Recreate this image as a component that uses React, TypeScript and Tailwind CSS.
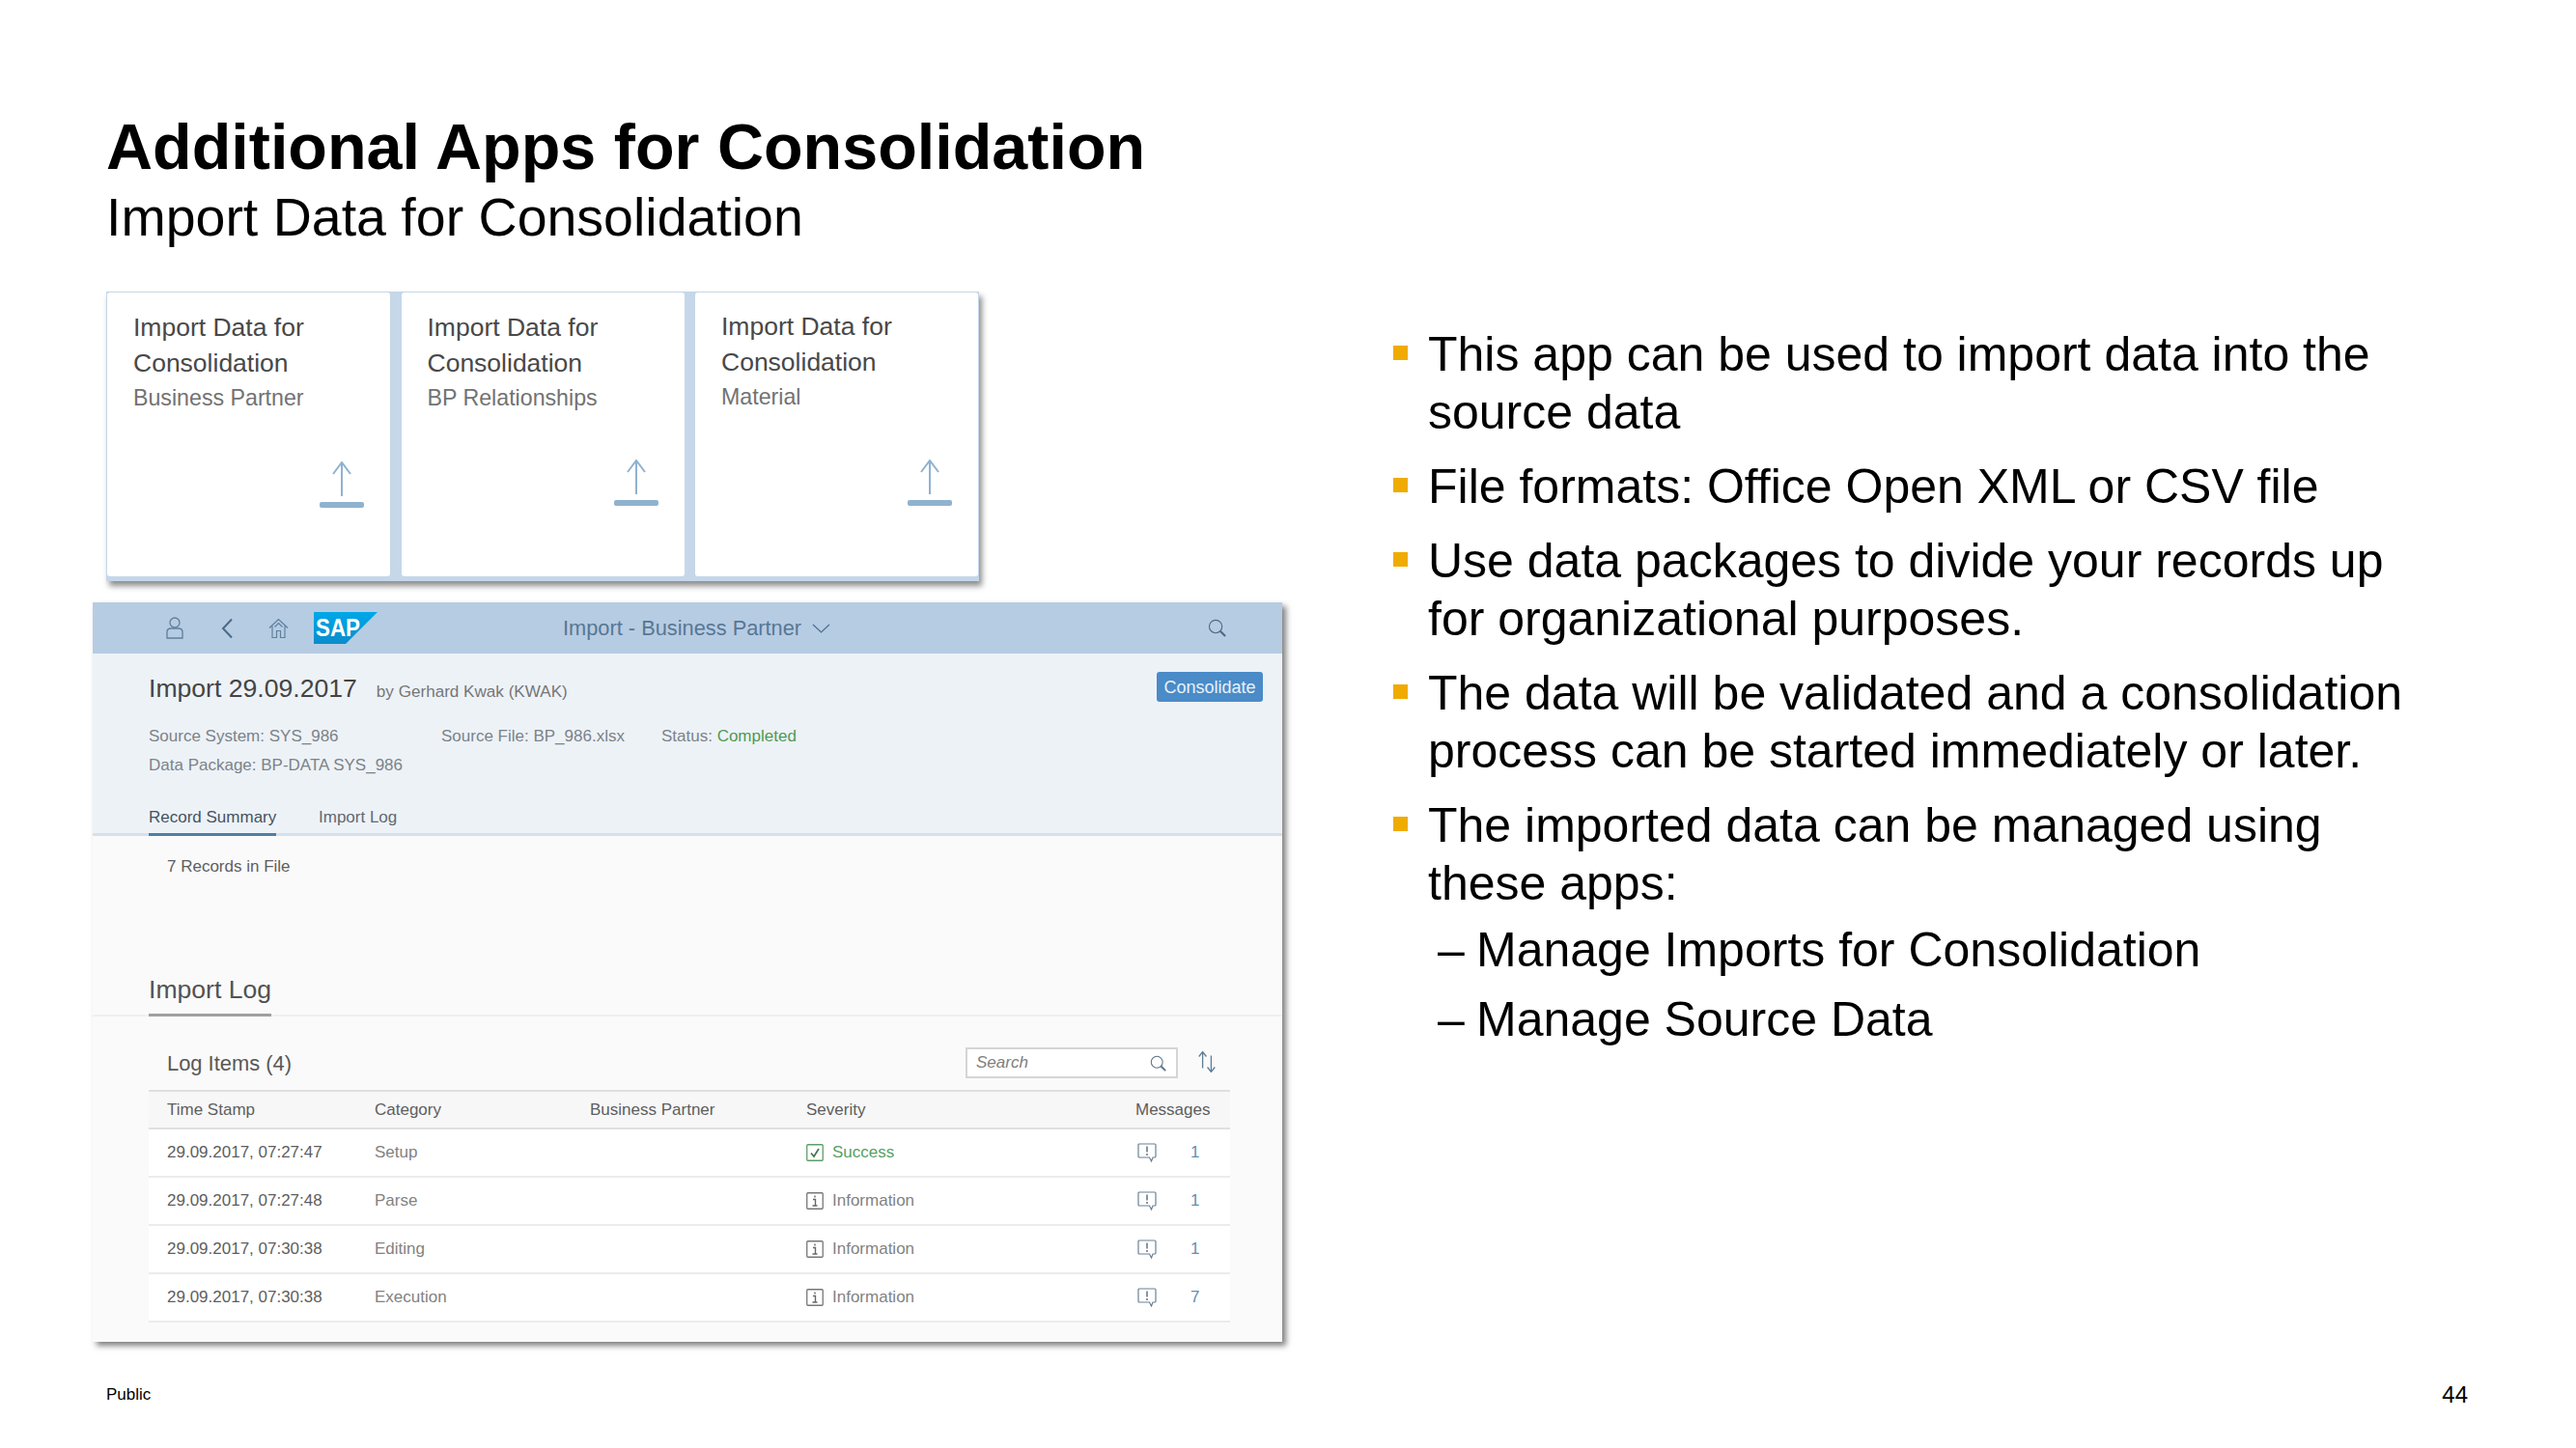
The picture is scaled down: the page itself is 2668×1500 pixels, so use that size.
import { ReactNode } from 'react';

const tiles = [
  { sub: 'Business Partner', top: 'pt-[18px]', iconTop: 'mt-[48px]' },
  { sub: 'BP Relationships', top: 'pt-[18px]', iconTop: 'mt-[46px]' },
  { sub: 'Material', top: 'pt-[17px]', iconTop: 'mt-[47px]' },
];

const logRows = [
  { time: '29.09.2017, 07:27:47', category: 'Setup', severity: 'Success', count: '1' },
  { time: '29.09.2017, 07:27:48', category: 'Parse', severity: 'Information', count: '1' },
  { time: '29.09.2017, 07:30:38', category: 'Editing', severity: 'Information', count: '1' },
  { time: '29.09.2017, 07:30:38', category: 'Execution', severity: 'Information', count: '7' },
];

const bullets = [
  { lines: ['This app can be used to import data into the', 'source data'] },
  { lines: ['File formats: Office Open XML or CSV file'] },
  { lines: ['Use data packages to divide your records up', 'for organizational purposes.'] },
  { lines: ['The data will be validated and a consolidation', 'process can be started immediately or later.'] },
  { lines: ['The imported data can be managed using', 'these apps:'] },
];

function UploadIcon() {
  return (
    <svg width="46" height="48" viewBox="0 0 46 48" fill="none" className="block">
      <path d="M23 36V1M14 13L23 1L32 13" stroke="#8fb2cf" strokeWidth="2" />
      <rect x="0" y="42" width="46" height="6" rx="2" fill="#8fb2cf" />
    </svg>
  );
}

function SearchGlyph({ size, color }: { size: number; color: string }) {
  return (
    <svg width={size} height={size} viewBox="0 0 20 20" fill="none" className="block">
      <circle cx="8.5" cy="8.5" r="7" stroke={color} strokeWidth="1.2" />
      <path d="M13.5 13.5L19 19" stroke={color} strokeWidth="2.2" />
    </svg>
  );
}

function SeverityIcon({ success }: { success: boolean }) {
  if (success) {
    return (
      <svg width="18" height="18" viewBox="0 0 18 18" fill="none" className="block">
        <rect x="0.75" y="0.75" width="16.5" height="16.5" rx="1" stroke="#5c9e68" strokeWidth="1.3" />
        <path d="M5 9.5L8 13L13 5" stroke="#47764f" strokeWidth="1.7" />
      </svg>
    );
  }
  return (
    <svg width="18" height="18" viewBox="0 0 18 18" fill="none" className="block">
      <rect x="0.75" y="0.75" width="16.5" height="16.5" rx="1" stroke="#777" strokeWidth="1.3" />
      <path d="M9 3.500V5.500M7 7.500H9.500V14M6.500 14H11.500" stroke="#666" strokeWidth="1.4" />
    </svg>
  );
}

function MessageIcon() {
  return (
    <svg width="20" height="20" viewBox="0 0 20 20" fill="none" className="block">
      <path d="M2 1H18A1 1 0 0 1 19 2V14A1 1 0 0 1 18 15H16L14.500 19L12.500 15H2A1 1 0 0 1 1 14V2A1 1 0 0 1 2 1Z" stroke="#6b8296" strokeWidth="1.2" />
      <path d="M10 3.500V9.500M10 11V13" stroke="#5d7386" strokeWidth="1.5" />
    </svg>
  );
}

function TableRow({ children, className }: { children: ReactNode; className: string }) {
  return <div className={`grid grid-cols-[19px_215px_223px_224px_341px_1fr] items-center ${className}`}>{children}</div>;
}

export default function App() {
  return (
    <div className="w-[2668px] h-[1500px] bg-white text-black flex flex-col overflow-hidden font-['Liberation_Sans',Arial,sans-serif]">
      {/* Slide title */}
      <div className="pt-[114px] pl-[110px]">
        <h1 className="h-[76px] text-[66.5px] leading-[76px] font-bold">Additional Apps for Consolidation</h1>
        <h2 className="mt-[5px] h-[60px] text-[55.5px] leading-[60px]">Import Data for Consolidation</h2>
      </div>

      <div className="flex mt-[47px] pl-[96px]">
        {/* Left: screenshots */}
        <div className="w-[1232px] shrink-0">
          <div className="ml-[14px] w-[904px] h-[300px] bg-[#c5d7e9] flex gap-[11.5px] pl-[1px] pt-[1px] shadow-[3px_5px_6px_rgba(0,0,0,0.45)]">
            {tiles.map((tile) => (
              <div key={tile.sub} className={`w-[293px] h-[294px] bg-white rounded-[3px] pl-[27px] ${tile.top}`}>
                <div className="text-[26.5px] leading-[37px] text-[#484848]">
                  Import Data for
                  <br />
                  Consolidation
                </div>
                <div className="text-[23.2px] leading-[35px] text-[#727272]">{tile.sub}</div>
                <div className={`flex justify-end pr-[27px] ${tile.iconTop}`}>
                  <UploadIcon />
                </div>
              </div>
            ))}
          </div>

          <div className="mt-[22px] h-[766px] bg-[#fafafa] flex flex-col shadow-[4px_4px_6px_rgba(0,0,0,0.5)]">
            {/* Shell bar */}
            <div className="h-[53px] bg-[#b6cce3] flex items-center shrink-0">
              <svg width="18" height="23" viewBox="0 0 18 23" fill="none" className="ml-[76px] block">
                <circle cx="9" cy="6" r="5" stroke="#5f7f9e" strokeWidth="1.3" />
                <path d="M1 22V16C1 13 3 12 5 12H13C15 12 17 13 17 16V22Z" stroke="#5f7f9e" strokeWidth="1.3" />
              </svg>
              <svg width="12" height="22" viewBox="0 0 12 22" fill="none" className="ml-[39px] block">
                <path d="M11 1.500L2 11L11 20.500" stroke="#4a6a88" strokeWidth="2" />
              </svg>
              <svg width="21" height="22" viewBox="0 0 21 22" fill="none" className="ml-[37px] block">
                <path d="M1 10.500L10.500 1.500L20 10.500M4 8.500V20.500H8.500V13.500H12.500V20.500H17V8.500M6.500 9.500L10.500 5.500L14.500 9.500" stroke="#5f7f9e" strokeWidth="1.2" />
              </svg>
              <svg width="66" height="33" viewBox="0 0 66 33" className="ml-[26px] block">
                <defs>
                  <linearGradient id="sapBlue" x1="0" y1="0" x2="0" y2="1">
                    <stop offset="0" stopColor="#00a8e8" />
                    <stop offset="1" stopColor="#0a8ccc" />
                  </linearGradient>
                </defs>
                <polygon points="0,0 66,0 33,33 0,33" fill="url(#sapBlue)" />
                <text x="2" y="25" fill="#ffffff" fontSize="25" fontWeight="700" textLength="46" lengthAdjust="spacingAndGlyphs">SAP</text>
              </svg>
              <span className="ml-[192px] text-[21.8px] text-[#587793] leading-none">Import - Business Partner</span>
              <svg width="19" height="10" viewBox="0 0 19 10" fill="none" className="ml-[11px] block">
                <path d="M1 1L9.500 9L18 1" stroke="#4f6f8d" strokeWidth="1.2" />
              </svg>
              <div className="ml-[391px]">
                <SearchGlyph size={19} color="#4f6a84" />
              </div>
            </div>

            {/* Object header */}
            <div className="h-[189px] bg-[#edf2f7] border-b-[3px] border-[#d5e1ec] pl-[58px] pr-[20px] shrink-0">
              <div className="flex items-start justify-between pt-[19px]">
                <div className="flex items-baseline h-[34px]">
                  <span className="text-[26.6px] leading-[34px] text-[#444444]">Import 29.09.2017</span>
                  <span className="ml-[20px] text-[17.1px] text-[#767676]">by Gerhard Kwak (KWAK)</span>
                </div>
                <button className="w-[110px] h-[31px] bg-[#4a8bc8] rounded-[3px] text-[18px] leading-none text-[#e8f1f9]">
                  Consolidate
                </button>
              </div>
              <div className="mt-[18px] flex text-[17px] leading-[30px] text-[#7c8388]">
                <span className="w-[303px]">Source System: SYS_986</span>
                <span className="w-[228px]">Source File: BP_986.xlsx</span>
                <span>
                  Status: <span className="text-[#4e9a57]">Completed</span>
                </span>
              </div>
              <div className="text-[17px] leading-[30px] text-[#7c8388]">Data Package: BP-DATA SYS_986</div>
              <div className="mt-[24px] flex text-[17px] leading-[30px]">
                <div className="w-[132px] h-[34px] border-b-[3px] border-[#4d7fa3] text-[#46535f] whitespace-nowrap">Record Summary</div>
                <div className="ml-[44px] text-[#5f6972]">Import Log</div>
              </div>
            </div>

            {/* Record summary */}
            <div className="h-[134px] pl-[77px] pt-[21px] text-[17px] leading-[22px] text-[#5e5e5e] shrink-0">7 Records in File</div>

            {/* Import log */}
            <div className="h-[53px] pl-[58px] border-b-2 border-[#efefef] shrink-0">
              <div className="w-[127px] h-[53px] border-b-[3px] border-[#a0a0a0] text-[26.6px] leading-[50px] text-[#525252] whitespace-nowrap">
                Import Log
              </div>
            </div>

            <div className="pl-[58px] pr-[54px]">
              <div className="h-[76px] flex items-start">
                <span className="pl-[19px] pt-[35px] text-[21.9px] leading-[28px] text-[#585858]">Log Items (4)</span>
                <div className="ml-auto mt-[32px] w-[220px] h-[32px] bg-white border-2 border-[#d5d5d5] flex items-center justify-between pl-[9px] pr-[10px]">
                  <span className="text-[17px] italic text-[#808080]">Search</span>
                  <SearchGlyph size={17} color="#5a7488" />
                </div>
                <svg width="22" height="22" viewBox="0 0 20 20" fill="none" className="block ml-[19px] mt-[36px] mr-[13px]">
                  <path d="M6 16V1M2.500 5L6 0.500L9.500 5" stroke="#5f7f98" strokeWidth="1.2" />
                  <path d="M14 4V19M10.500 15L14 19.500L17.500 15" stroke="#5f7f98" strokeWidth="1.2" />
                </svg>
              </div>

              <TableRow className="h-[41px] bg-[#f7f7f7] border-y-2 border-[#e0e0e0] text-[17px] text-[#5e5e5e]">
                <span />
                <span>Time Stamp</span>
                <span>Category</span>
                <span>Business Partner</span>
                <span>Severity</span>
                <span className="pr-[20px] whitespace-nowrap">Messages</span>
              </TableRow>
              {logRows.map((row) => (
                <TableRow key={row.time + row.category} className="h-[50px] bg-white border-b-2 border-[#ececec] text-[17px]">
                  <span />
                  <span className="text-[#5e5e5e] whitespace-nowrap">{row.time}</span>
                  <span className="text-[#828282]">{row.category}</span>
                  <span />
                  <span className="flex items-center gap-[9px]">
                    <SeverityIcon success={row.severity === 'Success'} />
                    <span className={row.severity === 'Success' ? 'text-[#58a064]' : 'text-[#828282]'}>{row.severity}</span>
                  </span>
                  <span className="flex items-center pl-[2px]">
                    <MessageIcon />
                    <span className="ml-[35px] text-[#5d8fb5]">{row.count}</span>
                  </span>
                </TableRow>
              ))}
            </div>
          </div>
        </div>

        {/* Right: bullet list */}
        <div className="ml-[115px] pt-[35px] text-[50px] leading-[60px]">
          {bullets.map((bullet) => (
            <div key={bullet.lines[0]} className="flex mb-[17px]">
              <div className="w-[15px] h-[15px] mt-[21px] bg-[#f0ab00] shrink-0" />
              <div className="ml-[21px] whitespace-nowrap">
                {bullet.lines.map((line) => (
                  <div key={line}>{line}</div>
                ))}
              </div>
            </div>
          ))}
          <div className="-mt-[8px] pl-[46px] flex">
            <span className="w-[40px]">–</span>
            <span>Manage Imports for Consolidation</span>
          </div>
          <div className="mt-[12px] pl-[46px] flex">
            <span className="w-[40px]">–</span>
            <span>Manage Source Data</span>
          </div>
        </div>
      </div>

      {/* Footer */}
      <div className="mt-auto mb-[40px] h-[30px] pl-[110px] pr-[112px] flex items-center justify-between">
        <span className="text-[17px]">Public</span>
        <span className="text-[24px]">44</span>
      </div>
    </div>
  );
}
